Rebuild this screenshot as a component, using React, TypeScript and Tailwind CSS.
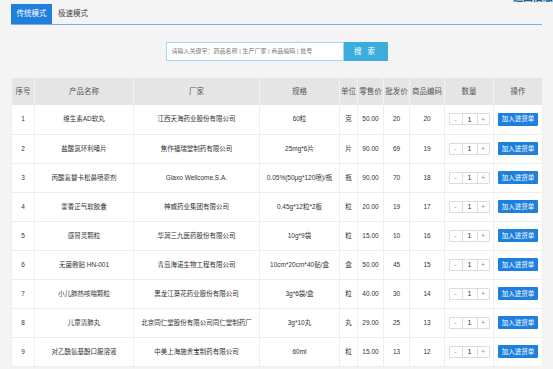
import React from "react";

type Row = {
  name: string;
  maker: string;
  spec: string;
  unit: string;
  retail: string;
  wholesale: string;
  code: string;
};

const rows: Row[] = [
  { name: "维生素AD软丸", maker: "江西天海药业股份有限公司", spec: "60粒", unit: "克", retail: "50.00", wholesale: "20", code: "20" },
  { name: "盐酸氯环利嗪片", maker: "焦作福瑞堂制药有限公司", spec: "25mg*6片", unit: "片", retail: "90.00", wholesale: "69", code: "19" },
  { name: "丙酸氟替卡松鼻喷雾剂", maker: "Glaxo Wellcome,S.A.", spec: "0.05%(50μg*120喷)/瓶", unit: "瓶", retail: "90.00", wholesale: "70", code: "18" },
  { name: "藿香正气软胶囊", maker: "神威药业集团有限公司", spec: "0.45g*12粒*2板", unit: "粒", retail: "20.00", wholesale: "19", code: "17" },
  { name: "感冒灵颗粒", maker: "华润三九医药股份有限公司", spec: "10g*9袋", unit: "粒", retail: "15.00", wholesale: "10", code: "16" },
  { name: "无菌敷贴 HN-001", maker: "青岛海诺生物工程有限公司", spec: "10cm*20cm*40贴/盒", unit: "盒", retail: "50.00", wholesale: "45", code: "15" },
  { name: "小儿肺热咳喘颗粒", maker: "黑龙江葵花药业股份有限公司", spec: "3g*6袋/盒", unit: "粒", retail: "40.00", wholesale: "30", code: "14" },
  { name: "儿童清肺丸", maker: "北京同仁堂股份有限公司同仁堂制药厂", spec: "3g*10丸", unit: "丸", retail: "29.00", wholesale: "25", code: "13" },
  { name: "对乙酰氨基酚口服溶液", maker: "中美上海施贵宝制药有限公司", spec: "60ml", unit: "粒", retail: "15.00", wholesale: "13", code: "12" },
];

const headers = ["序号", "产品名称", "厂家", "规格", "单位", "零售价", "批发价", "商品编码", "数量", "操作"];
const widths = ["w-[23px]", "w-[99px]", "w-[126px]", "w-[80px]", "w-[18px]", "w-[26px]", "w-[26px]", "w-[35px]", "w-[49px]", "w-[49px]"];

function Stepper() {
  return (
    <div className="mx-auto flex h-[12px] w-[41px] items-stretch rounded-[1px] border border-[#dcdcdc] bg-white text-[7px] leading-none">
      <span className="flex w-[12px] items-center justify-center text-[#5b9be0]">-</span>
      <span className="flex flex-1 items-center justify-center border-x border-[#dcdcdc] text-[#333]">1</span>
      <span className="flex w-[11px] items-center justify-center text-[#5b9be0]">+</span>
    </div>
  );
}

export default function App() {
  return (
    <div
      className="relative h-[369px] w-[553px] overflow-hidden bg-[#f4f4f4] text-[#333]"
      style={{ fontFamily: '"Liberation Sans", "Noto Sans CJK SC", sans-serif' }}
    >
      {/* header link, mostly cut off by the top edge */}
      <div className="absolute left-[513px] top-[-10px] whitespace-nowrap text-[10px] font-bold text-[#1b5d8e]">
        返回旧版模式
      </div>

      <div className="ml-[11px] w-[531px]">
        {/* tabs */}
        <div className="mt-[4px] flex h-[21px] items-stretch border-b border-[#7aaee6]">
          <div className="flex w-[41px] items-center justify-center bg-[#1f7fdd] text-[7.5px] text-white">传统模式</div>
          <div className="flex items-center px-[6px] text-[7.5px] text-[#444]">极速模式</div>
        </div>

        {/* search */}
        <div className="mt-[17px] flex justify-center">
          <div className="flex h-[19px] w-[178px] items-center border border-[#a8d4ec] bg-white pl-[5px] text-[6px] text-[#777]">
            请输入关键字：药品名称 | 生产厂家 | 商品编码 | 批号
          </div>
          <button className="h-[19px] w-[44px] bg-[#3aaddd] text-[7.5px] tracking-[2px] text-white">搜 索</button>
        </div>

        {/* product table */}
        <table className="mt-[17px] w-[531px] table-fixed border-collapse bg-white text-center">
          <thead>
            <tr className="h-[27px] bg-[#e5e5e5] text-[7.5px] text-[#555]">
              {headers.map((h, i) => (
                <th key={h} className={`${widths[i]} border-x border-[#f2f2f2] p-0 font-normal`}>
                  {h}
                </th>
              ))}
            </tr>
          </thead>
          <tbody className="text-[6.5px]">
            {rows.map((r, i) => (
              <tr key={r.code} className="h-[29px] border-b border-[#ededed]">
                <td className="border-x border-[#efefef] p-0">{i + 1}</td>
                <td className="border-x border-[#efefef] p-0">{r.name}</td>
                <td className="border-x border-[#efefef] p-0">{r.maker}</td>
                <td className="whitespace-nowrap border-x border-[#efefef] p-0">{r.spec}</td>
                <td className="border-x border-[#efefef] p-0">{r.unit}</td>
                <td className="border-x border-[#efefef] p-0">{r.retail}</td>
                <td className="border-x border-[#efefef] p-0">{r.wholesale}</td>
                <td className="border-x border-[#efefef] p-0">{r.code}</td>
                <td className="border-x border-[#efefef] p-0">
                  <Stepper />
                </td>
                <td className="border-x border-[#efefef] p-0">
                  <button className="mx-auto block h-[13px] w-[40px] rounded-[1px] bg-[#1e80dc] text-[6.5px] text-white">
                    加入进货单
                  </button>
                </td>
              </tr>
            ))}
          </tbody>
        </table>
      </div>
    </div>
  );
}
